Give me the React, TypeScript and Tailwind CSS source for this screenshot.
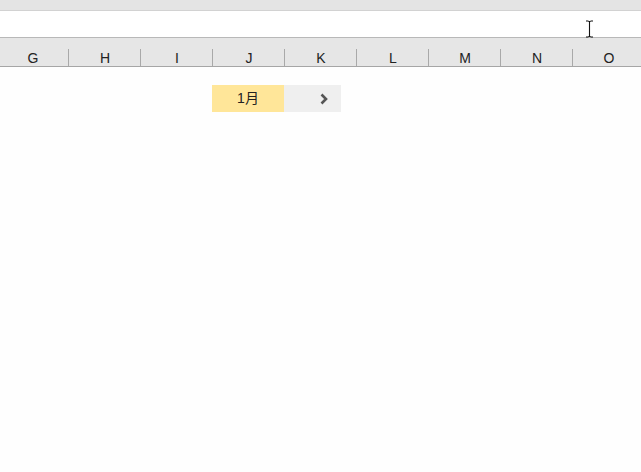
const cols = ['G', 'H', 'I', 'J', 'K', 'L', 'M', 'N', 'O'];

export default function App() {
  return (
    <div className="w-[641px] h-[472px] bg-[#fefefe] overflow-hidden flex flex-col" style={{ fontFamily: '"Liberation Sans", "Noto Sans CJK SC", sans-serif' }}>
      <div className="h-[11px] shrink-0 bg-[#e4e4e4] border-b border-[#d2d2d2]" />
      <div className="h-[27px] shrink-0 bg-white border-b border-[#b8b8b8] relative">
        <svg className="absolute left-[585px] top-[9px]" width="9" height="18" viewBox="0 0 9 18">
          <path d="M1 1h2.5M5.5 1H8M4.5 1.5v15M1 17h2.5M5.5 17H8M3.5 1.5h2M3.5 16.5h2" stroke="#111" strokeWidth="1.1" fill="none" />
        </svg>
      </div>
      <div className="h-[29px] shrink-0 bg-[#e6e6e6] border-b border-[#a6a6a6] flex -ml-[3px]">
        {cols.map((c, i) => (
          <div key={c} className="w-[72px] shrink-0 relative flex justify-center pt-[11px]">
            <span className="text-[14px] leading-[18px] text-[#222]">{c}</span>
            {i < cols.length - 1 && <div className="absolute right-0 bottom-0 h-[17px] w-px bg-[#a9a9a9]" />}
          </div>
        ))}
      </div>
      <div className="flex mt-[18px] ml-[212px] h-[27px]">
        <div className="w-[72px] bg-[#ffe699] flex items-center justify-center text-[14px] text-[#222]">1月</div>
        <div className="w-[57px] bg-[#efefef] flex items-center justify-end pr-[12px]">
          <svg width="9" height="12" viewBox="0 0 9 12">
            <path d="M1.5 1.5l4.5 4.5-4.5 4.5" stroke="#555" strokeWidth="2.6" fill="none" />
          </svg>
        </div>
      </div>
    </div>
  );
}
